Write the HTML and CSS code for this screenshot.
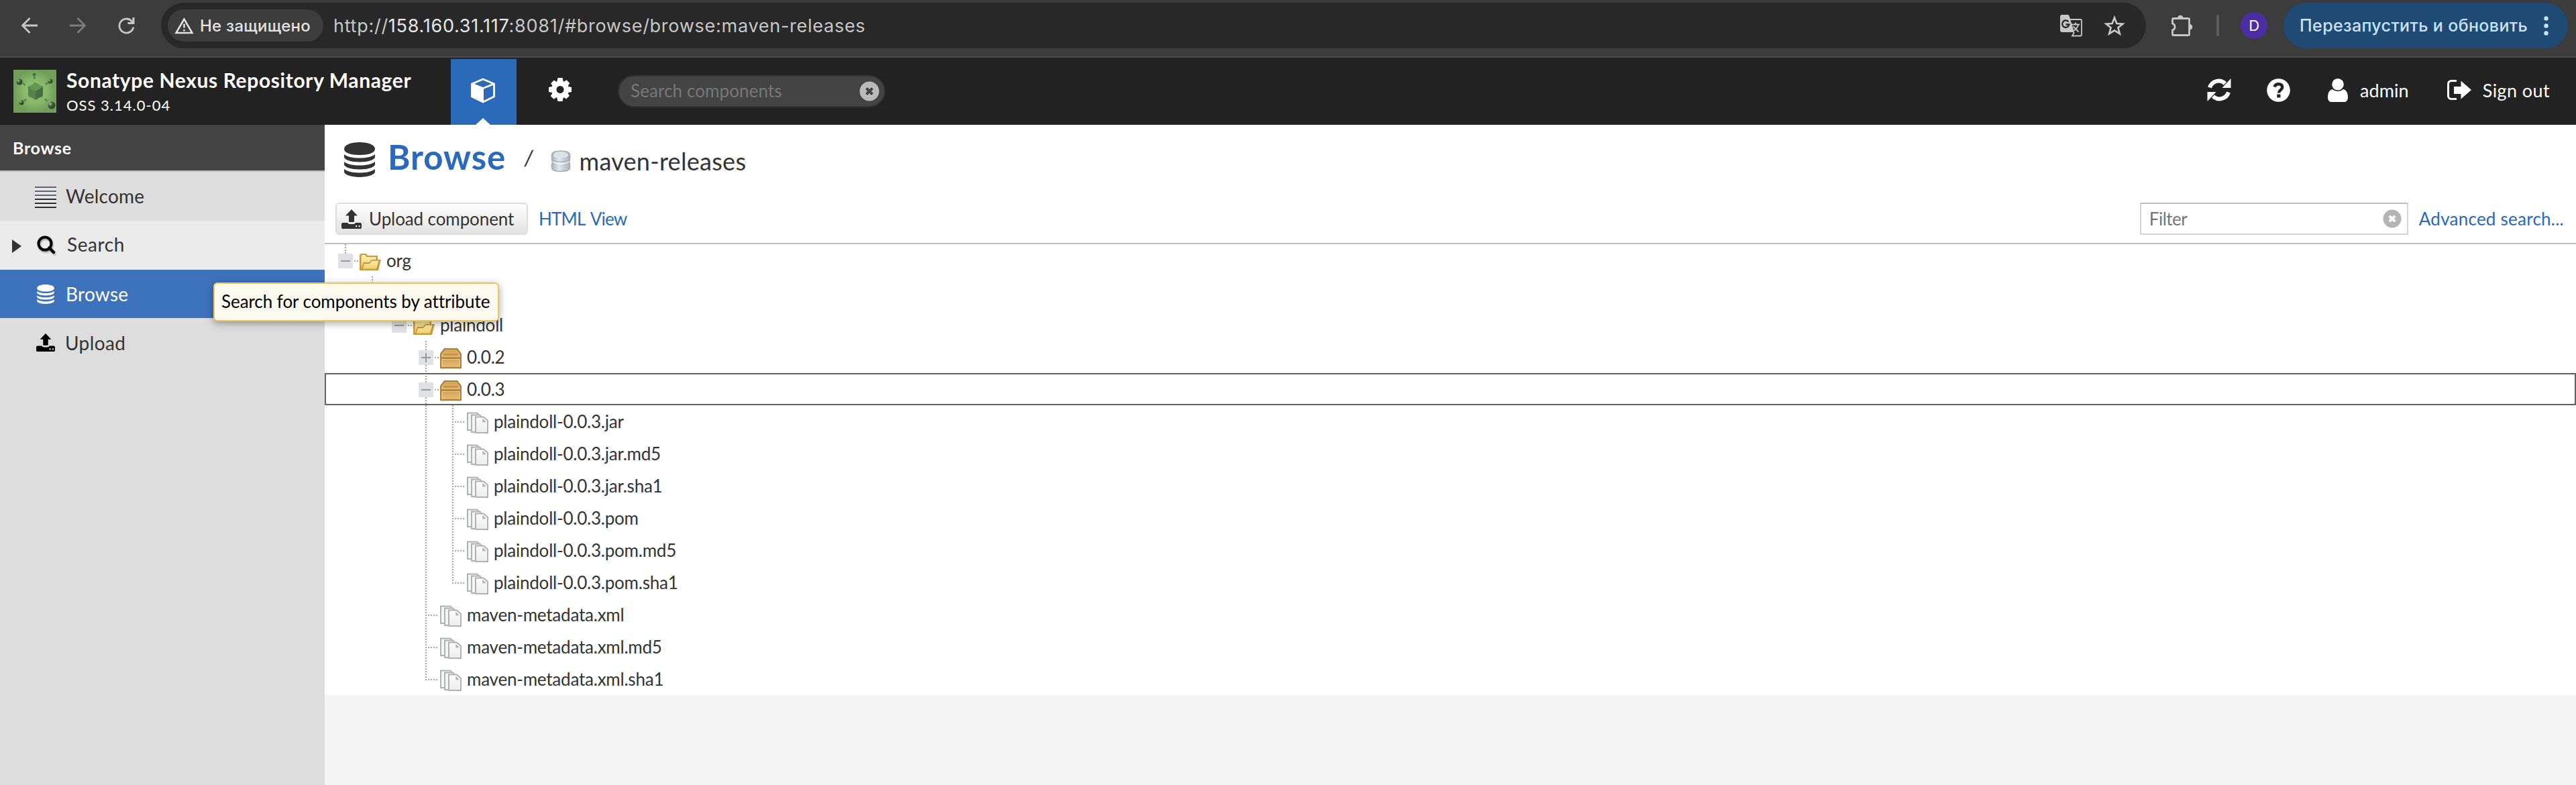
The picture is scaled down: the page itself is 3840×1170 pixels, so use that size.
FILE: index.html
```html
<!DOCTYPE html>
<html lang="ru">
<head>
<meta charset="utf-8">
<title>Browse - Nexus Repository Manager</title>
<link rel="stylesheet" href="styles.css">
</head>
<body>
<svg class="defs" width="0" height="0" aria-hidden="true">
  <defs>
    <linearGradient id="gold" x1="0" y1="0" x2="0" y2="1"><stop offset="0" stop-color="#fdf0b0"/><stop offset="1" stop-color="#f0cd68"/></linearGradient>
    <linearGradient id="box" x1="0" y1="0" x2="0" y2="1"><stop offset="0" stop-color="#d3a259"/><stop offset="1" stop-color="#e3bb74"/></linearGradient>
    <linearGradient id="paper" x1="0" y1="0" x2="0" y2="1"><stop offset="0" stop-color="#ffffff"/><stop offset="1" stop-color="#ececec"/></linearGradient>
    <linearGradient id="steel" x1="0" y1="0" x2="1" y2="0"><stop offset="0" stop-color="#aab4c0"/><stop offset=".4" stop-color="#e2e7ee"/><stop offset="1" stop-color="#a9b2bd"/></linearGradient>
    <radialGradient id="leaf"><stop offset="0" stop-color="#93c473"/><stop offset=".55" stop-color="#88b86a"/><stop offset="1" stop-color="#719e59"/></radialGradient>
    <radialGradient id="ball" cx=".3" cy=".3" r=".7"><stop offset="0" stop-color="#a8bf9b"/><stop offset=".5" stop-color="#3b5a35"/><stop offset="1" stop-color="#2b4826"/></radialGradient>
    <symbol id="i-db" viewBox="0 0 46 52">
      <path d="M0 10C0 4 10 0 23 0s23 4 23 10-10 9-23 9S0 16 0 10z"/>
      <path d="M0 18c5 4 13 5.500 23 5.500S41 22 46 18v4c0 4-10 7.500-23 7.500S0 26 0 22z"/>
      <path d="M0 29c5 4 13 5.500 23 5.500S41 33 46 29v4c0 4-10 7.500-23 7.500S0 37 0 33z"/>
      <path d="M0 40c5 4 13 5.500 23 5.500S41 44 46 40v4c0 4-10 8-23 8S0 48 0 44z"/>
    </symbol>
    <symbol id="i-upload" viewBox="0 0 30 29">
      <path d="M15 0l9 9.500h-5V18a1 1 0 0 1-1 1h-6a1 1 0 0 1-1-1V9.500H6z"/>
      <path fill-rule="evenodd" d="M2 20h7c1 1.500 2 2 3.500 2h5c1.500 0 2.500-.5 3.500-2h7a2 2 0 0 1 2 2v5a2 2 0 0 1-2 2H2a2 2 0 0 1-2-2v-5a2 2 0 0 1 2-2zm19 4v2.200h2.200V24zm4.500 0v2.200h2.200V24z"/>
    </symbol>
    <symbol id="i-folder" viewBox="0 0 32 28">
      <path d="M0 26V3l2-2h8l2 3h15v6h5l-4 16z" fill="#c99a43"/>
      <path d="M2.500 24V4l1-1h5l2 3h14v4h-6l-4 4H6z" fill="url(#gold)"/>
      <path d="M3.500 24.500l3-9h8l4-4.500h11l-4 13.500z" fill="url(#gold)" stroke="#c9963c" stroke-width="1.500"/>
    </symbol>
    <symbol id="i-box" viewBox="0 0 32 32">
      <path d="M0 9l6-8h20l6 8v22H0z" fill="#b07f3c"/>
      <path d="M2 10l5-7h18l5 7v5H2z" fill="url(#box)"/>
      <path d="M2 17h28v12H2z" fill="url(#box)"/>
      <path d="M5 10.500h22" stroke="#ba8b48" stroke-width="2"/>
      <path d="M2 15h28" stroke="#b88440" stroke-width="1.500"/>
      <path d="M3 17.500h26M3 17.500V29M29 17.500V29" stroke="#eccb90" stroke-width="1.200" fill="none"/>
      <path d="M0 31.500h32" stroke="#d9d5ce"/>
    </symbol>
    <symbol id="i-files" viewBox="0 0 32 32">
      <path d="M1 1.500h14l4 4V27H1z" fill="#f5f6f6" stroke="#b0b1b1" stroke-width="2"/>
      <path d="M7 4.500h12l4 4V30H7z" fill="#f5f6f6" stroke="#b0b1b1" stroke-width="2"/>
      <path d="M13 7.500h12l6 5.500v18H13z" fill="url(#paper)" stroke="#b0b1b1" stroke-width="2"/>
      <path d="M24 11.500v3h3z" fill="#fff" stroke="#b0b1b1" stroke-width="1.500"/>
    </symbol>
    <symbol id="i-clear" viewBox="0 0 30 30">
      <circle cx="15" cy="15" r="14.500" stroke="none"/>
      <path d="M10.500 10.500l9 9M19.500 10.500l-9 9" stroke-width="4.200"/>
    </symbol>
  </defs>
</svg>

<div class="chrome">
  <svg class="nav-back" width="24" height="24" viewBox="0 0 24 24"><path d="M24 12H2M12.500 1L1.500 12l11 11" fill="none" stroke="#c7c7c7" stroke-width="2.800"/></svg>
  <svg class="nav-fwd" width="24" height="24" viewBox="0 0 24 24"><path d="M0 12h22M11.500 1l11 11-11 11" fill="none" stroke="#7c7c7c" stroke-width="2.800"/></svg>
  <svg class="nav-reload" width="25" height="25" viewBox="0 0 25 25"><path d="M22.800 14.500A10.500 10.500 0 1 1 19.800 5l3 3" fill="none" stroke="#c7c7c7" stroke-width="2.800"/><path d="M24.500 0v10h-10V7h7V0z" fill="#c7c7c7"/></svg>
  <div class="omnibox">
    <div class="chip">
      <svg width="29" height="25" viewBox="0 0 29 25"><path d="M14.500 2.500L2.500 23h24z" fill="none" stroke="#e3e3e3" stroke-width="2.500"/><path d="M14.500 9.500v6M14.500 18v2.500" stroke="#e3e3e3" stroke-width="2.500"/></svg>
      <span>Не защищено</span>
    </div>
    <div class="url">http://<b>158.160.31.117</b>:8081/#browse/browse:maven-releases</div>
    <svg class="translate" width="34" height="33" viewBox="0 0 34 33"><path d="M2 0h9.500a2 2 0 0 1 2 1.500L21 26H3a3 3 0 0 1-3-3V3a3 3 0 0 1 2-3z" fill="#c7c7c7"/><path d="M12.500 10.500A5.200 5.200 0 1 0 13.500 14.500H8.500" fill="none" stroke="#282828" stroke-width="2.300"/><path d="M14.500 7H30a2 2 0 0 1 2 2v20.500a2 2 0 0 1-2 2H18l3-5.500" fill="none" stroke="#c7c7c7" stroke-width="1.800"/><path d="M17 14.500h12M23 11.500v3M27 14.500c-1 5-4 8-8 10M19.500 17.500l8 8" fill="none" stroke="#c7c7c7" stroke-width="1.800"/></svg>
    <svg class="star" width="32" height="30" viewBox="0 0 32 30"><path d="M16 3.500l3.400 8.500 9 .6-7 5.700 2.400 9L16 22.300l-7.800 5 2.400-9-7-5.700 9-.6z" fill="none" stroke="#c7c7c7" stroke-width="2.700"/></svg>
  </div>
  <svg class="puzzle" width="33" height="33" viewBox="0 0 33 33"><path d="M4 5.500h22a1.500 1.500 0 0 1 1.500 1.500v22a1.500 1.500 0 0 1-1.500 1.500H4A1.500 1.500 0 0 1 2.500 29v-6a5.300 5.300 0 0 0 0-10V7A1.500 1.500 0 0 1 4 5.500z" fill="none" stroke="#c7c7c7" stroke-width="2.800"/><path d="M10 5a4.300 4.300 0 0 1 8.600 0zM28 14a4.300 4.300 0 0 1 0 8.600z" fill="#c7c7c7"/></svg>
  <span class="divider"></span>
  <span class="avatar">D</span>
  <div class="relaunch">
    <span>Перезапустить и обновить</span>
    <svg width="7" height="29" viewBox="0 0 7 29"><g fill="#c8e3fb"><circle cx="3.500" cy="3.500" r="3.200"/><circle cx="3.500" cy="14.500" r="3.200"/><circle cx="3.500" cy="25.500" r="3.200"/></g></svg>
  </div>
</div>

<header class="header">
  <svg class="logo" width="64" height="64" viewBox="0 0 64 64">
    <rect width="64" height="64" fill="url(#leaf)"/>
    <path d="M33 32L10 18M33 32L55 17M33 32L31 8M33 32L12 50M33 32l25 21" stroke="#5f8a50" stroke-width="3" stroke-dasharray="5 5" stroke-dashoffset="2"/>
    <path d="M33 19l11 6.500L33 32l-11-6.500z" fill="#669552"/><path d="M22 25.500L33 32v13l-11-6.500z" fill="#57834a"/><path d="M44 25.500L33 32v13l11-6.500z" fill="#476f3f"/>
    <circle cx="9" cy="18" r="4.500" fill="url(#ball)"/><circle cx="55" cy="17" r="3.500" fill="url(#ball)"/><circle cx="31" cy="7" r="2.500" fill="#4d7543"/><circle cx="12" cy="49" r="3.500" fill="url(#ball)"/><circle cx="57" cy="53" r="5.500" fill="url(#ball)"/>
  </svg>
  <div class="brand"><div class="brand-name">Sonatype Nexus Repository Manager</div><div class="brand-version">OSS 3.14.0-04</div></div>
  <div class="mode active">
    <svg width="38" height="38" viewBox="0 0 38 38"><path d="M19 2l16.500 7v19L19 36 2.500 28V9z" fill="none" stroke="#fff" stroke-width="2.800" stroke-linejoin="round"/><path d="M2.500 9L19 15.500 35.500 9" fill="none" stroke="#fff" stroke-width="2.800"/><path d="M1.500 9.500L20 16v21L1.500 28.500z" fill="#fff"/></svg>
  </div>
  <svg class="gear" width="34" height="35" viewBox="-17 -17.500 34 35"><g fill="#fff"><g id="teeth"><path d="M-3.500-17.500h7l1.500 7h-10zM-3.500 17.500h7l1.500-7h-10z"/><path d="M-17-3.500v7l7 1.500V-5zM17-3.500v7l-7 1.500V-5z"/></g><use href="#teeth" transform="rotate(45) scale(.96)"/></g><circle r="9.300" fill="none" stroke="#fff" stroke-width="7.500"/></svg>
  <div class="quick-search"><span>Search components</span><svg class="clear" width="30" height="30"><use href="#i-clear"/></svg></div>
  <div class="user-tools">
    <svg width="36" height="36" viewBox="0 0 36 36"><g fill="none" stroke="#fff" stroke-width="6"><path d="M4 14.500A14 14 0 0 1 27 8.500"/><path d="M32 21.500A14 14 0 0 1 9 27.500"/></g><path d="M35.500 1v14h-13zM.5 35V21h13z" fill="#fff"/></svg>
    <svg class="help" width="35" height="35" viewBox="0 0 35 35"><circle cx="17.500" cy="17.500" r="17.300" fill="#fff"/><path d="M11.500 12.500c1-3 3.500-4.300 6.200-4.300 3.300 0 5.500 2 5.500 4.800 0 4-5.200 4.300-5.200 8.500" fill="none" stroke="#222" stroke-width="4.500"/><path d="M15.300 23.500h5.200v5h-5.200z" fill="#222"/></svg>
    <svg class="person" width="30" height="35" viewBox="0 0 30 35"><circle cx="15" cy="8.800" r="8.800" fill="#fff"/><path d="M7 16c2 2 5 3 8 3s6-1 8-3c5 1 7 6 7 12 0 4-2 7-5 7H5c-3 0-5-3-5-7 0-6 2-11 7-12z" fill="#fff"/></svg>
    <span class="user">admin</span>
    <svg class="exit" width="36" height="30" viewBox="0 0 36 30"><path d="M14 1.500H6A4.500 4.500 0 0 0 1.500 6v18A4.500 4.500 0 0 0 6 28.500h8" fill="none" stroke="#fff" stroke-width="3"/><path d="M10 10h10.500V1.500L36 15 20.500 28.500V21H10z" fill="#fff"/></svg>
    <span class="signout">Sign out</span>
  </div>
</header>

<div class="workspace">
  <nav class="sidebar">
    <div class="sidebar-title">Browse</div>
    <div class="item"><svg class="lines" width="32" height="32" viewBox="0 0 32 32"><path fill="#fff" opacity=".25" d="M0 0h32v32H0z"/><path d="M0 1h32M0 7h32M0 13h32" stroke="#5b6470" stroke-width="2.200"/><path d="M0 19h32M0 25h32M0 31h32" stroke="#2d2c2c" stroke-width="2.200"/></svg><span>Welcome</span></div>
    <div class="item hover"><svg class="caret" width="14" height="20"><path d="M0 0l14 10L0 20z" fill="#333"/></svg><svg class="lens" width="30" height="30" viewBox="0 0 30 30"><circle cx="12" cy="12" r="9.500" fill="none" stroke="#000" stroke-width="4"/><path d="M18.500 18.500l6.500 6.500" stroke="#000" stroke-width="4.500" stroke-linecap="round"/></svg><span>Search</span></div>
    <div class="item selected"><svg class="small-db" width="26" height="29"><use href="#i-db"/></svg><span>Browse</span></div>
    <div class="item last"><svg class="small-up" width="28" height="27"><use href="#i-upload"/></svg><span>Upload</span></div>
  </nav>

  <main class="content">
    <div class="crumbs">
      <svg class="big-db" width="46" height="52"><use href="#i-db"/></svg>
      <span class="feature">Browse</span>
      <span class="slash">/</span>
      <svg class="repo-db" width="30" height="33" viewBox="0 0 30 33"><path d="M1.500 7c0-4 4-6 13.500-6s13.500 2 13.500 6v6c0 2-.5 3-1.500 4 1 1 1.500 2 1.500 4v5c0 4-5 5.500-13.500 5.500S1.500 30 1.500 26v-5c0-2 .5-3 1.500-4-1-1-1.500-2-1.500-4z" fill="url(#steel)" stroke="#a4acb5" stroke-width="1.500"/><ellipse cx="15" cy="7" rx="11" ry="4.500" fill="#dde3ea"/><path d="M3 17c6 4 18 4 24 0" fill="none" stroke="#fff" stroke-width="1.500"/><path d="M3 14.500c6 3.500 18 3.500 24 0" fill="none" stroke="#9aa5b2" stroke-width="1"/></svg>
      <span class="repo">maven-releases</span>
    </div>
    <div class="toolbar">
      <div class="button"><svg width="30" height="29"><use href="#i-upload"/></svg><span>Upload component</span></div>
      <span class="link html-view">HTML View</span>
      <div class="filter"><span>Filter</span><svg class="clear" width="28" height="28"><use href="#i-clear"/></svg></div>
      <span class="link advanced">Advanced search...</span>
    </div>

    <div class="tree">
      <div class="row"><i class="g top"><i class="exp"></i></i><svg class="folder" width="32" height="28"><use href="#i-folder"/></svg><span>org</span></div>
      <div class="row"><i class="g"></i><i class="g top"><i class="exp"></i></i><svg class="folder" width="32" height="28"><use href="#i-folder"/></svg></div>
      <div class="row"><i class="g"></i><i class="g"></i><i class="g top"><i class="exp"></i></i><svg class="folder" width="32" height="28"><use href="#i-folder"/></svg><span>plaindoll</span></div>
      <div class="row"><i class="g"></i><i class="g"></i><i class="g"></i><i class="g full"><i class="exp plus"></i></i><svg width="32" height="32"><use href="#i-box"/></svg><span>0.0.2</span></div>
      <div class="row focused"><i class="g"></i><i class="g"></i><i class="g"></i><i class="g full"><i class="exp"></i></i><svg width="32" height="32"><use href="#i-box"/></svg><span>0.0.3</span></div>
      <div class="row"><i class="g"></i><i class="g"></i><i class="g"></i><i class="g full"></i><i class="g full tee"></i><svg width="32" height="32"><use href="#i-files"/></svg><span>plaindoll-0.0.3.jar</span></div>
      <div class="row"><i class="g"></i><i class="g"></i><i class="g"></i><i class="g full"></i><i class="g full tee"></i><svg width="32" height="32"><use href="#i-files"/></svg><span>plaindoll-0.0.3.jar.md5</span></div>
      <div class="row"><i class="g"></i><i class="g"></i><i class="g"></i><i class="g full"></i><i class="g full tee"></i><svg width="32" height="32"><use href="#i-files"/></svg><span>plaindoll-0.0.3.jar.sha1</span></div>
      <div class="row"><i class="g"></i><i class="g"></i><i class="g"></i><i class="g full"></i><i class="g full tee"></i><svg width="32" height="32"><use href="#i-files"/></svg><span>plaindoll-0.0.3.pom</span></div>
      <div class="row"><i class="g"></i><i class="g"></i><i class="g"></i><i class="g full"></i><i class="g full tee"></i><svg width="32" height="32"><use href="#i-files"/></svg><span>plaindoll-0.0.3.pom.md5</span></div>
      <div class="row"><i class="g"></i><i class="g"></i><i class="g"></i><i class="g full"></i><i class="g top tee"></i><svg width="32" height="32"><use href="#i-files"/></svg><span>plaindoll-0.0.3.pom.sha1</span></div>
      <div class="row"><i class="g"></i><i class="g"></i><i class="g"></i><i class="g full tee"></i><svg width="32" height="32"><use href="#i-files"/></svg><span>maven-metadata.xml</span></div>
      <div class="row"><i class="g"></i><i class="g"></i><i class="g"></i><i class="g full tee"></i><svg width="32" height="32"><use href="#i-files"/></svg><span>maven-metadata.xml.md5</span></div>
      <div class="row"><i class="g"></i><i class="g"></i><i class="g"></i><i class="g top tee"></i><svg width="32" height="32"><use href="#i-files"/></svg><span>maven-metadata.xml.sha1</span></div>
    </div>
  </main>
</div>
<div class="tooltip">Search for components by attribute</div>
</body>
</html>
```
FILE: styles.css
```css
* { box-sizing: border-box; }
body { margin: 0; width: 3840px; height: 1170px; overflow: hidden; display: flex; flex-direction: column; position: relative; font: 26px Lato, "Liberation Sans", sans-serif; color: #333; background: #f4f4f4; white-space: nowrap; }
svg { display: block; flex: none; }
.defs { position: absolute; }

/* Browser toolbar */
.chrome { flex: none; height: 86px; display: flex; align-items: center; padding: 0 12px 8px 32px; background: #3c3c3c; border-bottom: 2px solid #4a4a4a; font-family: Inter, "Liberation Sans", sans-serif; }
.nav-fwd { margin-left: 48px; }
.nav-reload { margin-left: 48px; }
.omnibox { width: 2960px; height: 68px; margin-left: 39px; padding: 0 31px 0 10px; border-radius: 34px; background: #282828; display: flex; align-items: center; }
.chip { width: 232px; height: 48px; padding-left: 10px; border-radius: 24px; background: #3c3c3c; color: #e3e3e3; display: flex; align-items: center; gap: 9px; font-size: 24px; font-weight: 500; letter-spacing: .25px; }
.url { margin-left: 15px; font-size: 27px; letter-spacing: .73px; color: #c7c7c7; }
.url b { font-weight: 400; color: #e8e8e8; }
.translate { margin-left: auto; }
.star { margin-left: 31px; }
.puzzle { margin: 0 0 0 37px; }
.divider { width: 4px; height: 32px; margin-left: 35px; border-radius: 2px; background: #5d5d5d; }
.avatar { width: 40px; height: 40px; margin-left: 32px; border-radius: 50%; background: #4b2ea3; color: #fff; font-size: 22px; line-height: 40px; text-align: center; }
.relaunch { width: 424px; height: 68px; margin-left: 24px; padding: 0 29px 0 24px; border-radius: 34px; background: #1f4a73; color: #c8e3fb; display: flex; align-items: center; justify-content: space-between; font-size: 25px; font-weight: 500; letter-spacing: .36px; }

/* Application header */
.header { flex: none; height: 100px; display: flex; align-items: flex-start; background: #222; color: #fff; }
.logo { margin: 18px 15px 0 20px; }
.brand { width: 573px; padding-top: 15px; }
.brand-name { font-size: 30px; font-weight: 700; line-height: 36px; letter-spacing: .62px; }
.brand-version { margin-top: 6px; font-size: 22px; line-height: 28px; letter-spacing: 1px; }
.mode { width: 98px; height: 98px; margin-top: 2px; padding-top: 28px; background: #2b69b9; display: flex; flex-direction: column; align-items: center; justify-content: space-between; }
.mode svg { margin-left: -3px; }
.mode::after { content: ""; border: 11px solid transparent; border-top: 0; border-bottom: 10px solid #fff; margin-left: -2px; }
.gear { margin: 30px 0 0 48px; }
.quick-search { width: 399px; height: 48px; margin: 26px 0 0 69px; padding: 0 7px 2px 17px; border: 2px solid #333; border-radius: 24px; background: #444; color: #777; display: flex; align-items: center; justify-content: space-between; letter-spacing: .1px; }
.clear { fill: #b4b4b4; margin-top: 2px; }
.quick-search .clear { fill: #bbb; stroke: #444; }
.filter .clear { stroke: #fff; }
.user-tools { margin-left: auto; height: 96px; padding-right: 39px; display: flex; align-items: center; font-size: 27px; }
.help { margin-left: 53px; }
.person { margin-left: 56px; }
.user { margin-left: 18px; letter-spacing: .1px; }
.exit { margin-left: 57px; }
.signout { margin-left: 17px; letter-spacing: .4px; }

/* Feature menu */
.workspace { flex: 1; display: flex; min-height: 0; }
.sidebar { width: 484px; background: #ddd; font-size: 28px; letter-spacing: .25px; }
.sidebar-title { height: 70px; padding-left: 19px; line-height: 69px; background: #444; border-bottom: 2px solid #bbb; color: #fff; font-size: 25px; font-weight: 700; letter-spacing: .7px; }
.item { height: 73px; display: flex; align-items: center; padding-bottom: 2px; }
.lines { margin: 4px 14px 0 52px; }
.hover { background: #ebebeb; padding-bottom: 4px; }
.hover span { letter-spacing: .6px; }
.caret { margin: 7px 0 0 18px; }
.lens { margin: 4px 15px 0 23px; filter: drop-shadow(1px 2px 1px rgba(0,0,0,.3)); }
.selected { height: 72px; padding-bottom: 0; background: #3d73bd; color: #fff; }
.small-db { margin: 0 17px 0 55px; fill: #fff; }
.last { padding-bottom: 0; }
.last span { padding-top: 1px; letter-spacing: .4px; }
.small-up { margin: 0 15px 0 54px; fill: #000; }

/* Page heading and toolbar */
.content { flex: 1; min-width: 0; }
.crumbs { height: 104px; display: flex; align-items: center; padding-left: 29px; background: #fff; }
.big-db { fill: #333; }
.feature { width: 178px; margin: -9px 0 0 19px; color: #2b69b9; font-size: 51px; font-weight: 700; letter-spacing: .95px; }
.slash { margin: -8px 0 0 25px; font-size: 32px; transform: skewX(-4deg); }
.repo-db { margin: 4px 0 0 26px; }
.repo { margin: 3px 0 0 12px; font-size: 36px; letter-spacing: .3px; }
.toolbar { height: 74px; display: flex; align-items: flex-start; padding: 12px 18px 0 16px; background: #fff; border-bottom: 2px solid #bdbdbd; line-height: 44px; }
.button { width: 287px; height: 48px; padding-left: 7px; border: 2px solid #ddd; border-radius: 6px; background: linear-gradient(#fff, #e3e3e3); display: flex; align-items: center; }
.button svg { fill: #333; }
.button span { margin-left: 11px; padding-bottom: 1px; letter-spacing: -.1px; }
.link { color: #2b69b9; padding-top: 2px; }
.html-view { margin-left: 16px; letter-spacing: -.8px; word-spacing: 3px; }
.filter { width: 400px; height: 48px; margin-left: auto; padding: 0 8px 0 12px; border: 2px solid #d5d5d5; border-top-color: #bdbdbd; display: flex; align-items: center; justify-content: space-between; color: #757575; letter-spacing: -.5px; }
.filter .clear { margin-top: 0; }
.advanced { margin-left: 16px; letter-spacing: .25px; }

/* Repository tree */
.tree { background: #fff; }
.row { height: 48px; display: flex; align-items: center; padding-left: 12px; }
.row span { margin-left: 8px; letter-spacing: -.22px; }
.row > svg { margin-top: 3px; }
.row .folder { margin-top: 5px; }
.focused { outline: 2px solid #626264; outline-offset: -2px; }
.g { width: 40px; height: 48px; flex: none; padding: 14px 0 0 8px; background-repeat: no-repeat; }
.full { background-image: repeating-linear-gradient(#a8a8a8 0 2px, #fff 2px 4px); background-size: 2px 48px; background-position: 18px 0; }
.top { background-image: repeating-linear-gradient(#a8a8a8 0 2px, #fff 2px 4px); background-size: 2px 26px; background-position: 18px 0; }
.tee { background-image: repeating-linear-gradient(#a8a8a8 0 2px, #fff 2px 4px), repeating-linear-gradient(90deg, #a8a8a8 0 2px, #fff 2px 4px); background-size: 2px 48px, 18px 2px; background-position: 18px 0, 18px 24px; }
.top.tee { background-size: 2px 26px, 18px 2px; }
.exp { display: block; width: 22px; height: 22px; background: linear-gradient(#999, #999) center / 14px 2px no-repeat, #e0e1e6; }
.exp::after { content: ""; display: block; width: 6px; height: 2px; margin-left: 24px; transform: translateY(10px); background: repeating-linear-gradient(90deg, #a8a8a8 0 2px, #fff 2px 4px); }
.exp.plus { background: linear-gradient(#999, #999) center / 14px 2px no-repeat, linear-gradient(#999, #999) center / 2px 14px no-repeat, #e0e1e6; }

.tooltip { position: absolute; left: 318px; top: 421px; width: 426px; height: 58px; padding: 0 0 0 10px; border: 2px solid #ecc55c; border-radius: 6px; background: #fffaf0; color: #000; line-height: 53px; letter-spacing: -.06px; box-shadow: 0 3px 12px rgba(0,0,0,.35); }
```
